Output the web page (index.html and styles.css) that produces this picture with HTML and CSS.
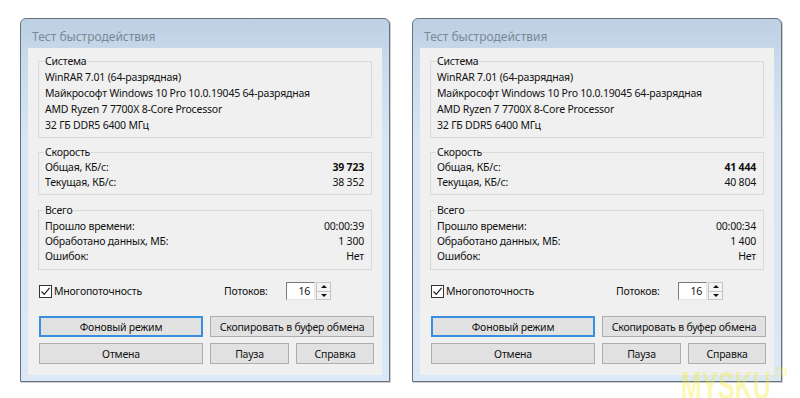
FILE: index.html
```html
<!DOCTYPE html>
<html lang="ru">
<head>
    <meta charset="UTF-8">
    <title>Тест быстродействия</title>
    <link rel="stylesheet" href="styles.css">
</head>
<body>
    <div class="desk">
        <div class="dialog">
            <div class="caption">Тест быстродействия</div>
            <div class="client">
                <fieldset class="group sys">
                    <legend>Система</legend>
                    <div class="row">WinRAR 7.01 (64-разрядная)</div>
                    <div class="row">Майкрософт Windows 10 Pro 10.0.19045 64-разрядная</div>
                    <div class="row">AMD Ryzen 7 7700X 8-Core Processor</div>
                    <div class="row">32 ГБ DDR5 6400 МГц</div>
                </fieldset>
                <fieldset class="group speed">
                    <legend>Скорость</legend>
                    <div class="row"><span>Общая, КБ/с:</span><b>39 723</b></div>
                    <div class="row"><span>Текущая, КБ/с:</span><span>38 352</span></div>
                </fieldset>
                <fieldset class="group total">
                    <legend>Всего</legend>
                    <div class="row"><span>Прошло времени:</span><span>00:00:39</span></div>
                    <div class="row"><span>Обработано данных, МБ:</span><span>1 300</span></div>
                    <div class="row"><span>Ошибок:</span><span>Нет</span></div>
                </fieldset>
                <div class="opts">
                    <label class="check">
                        <span class="box"><svg width="11" height="11" viewBox="0 0 11 11"><path d="M1.5 5.5 L4.2 8.4 L9.6 1.8" fill="none" stroke="#222" stroke-width="1.2"/></svg></span>
                        Многопоточность
                    </label>
                    <span class="threads">Потоков:</span>
                    <span class="spin">
                        <span class="edit">16</span>
                        <span class="arrows"><span class="up"></span><span class="down"></span></span>
                    </span>
                </div>
                <div class="buttons">
                    <button class="btn default">Фоновый режим</button>
                    <button class="btn wide">Скопировать в буфер обмена</button>
                    <button class="btn">Отмена</button>
                    <button class="btn">Пауза</button>
                    <button class="btn">Справка</button>
                </div>
            </div>
        </div>

        <div class="dialog">
            <div class="caption">Тест быстродействия</div>
            <div class="client">
                <fieldset class="group sys">
                    <legend>Система</legend>
                    <div class="row">WinRAR 7.01 (64-разрядная)</div>
                    <div class="row">Майкрософт Windows 10 Pro 10.0.19045 64-разрядная</div>
                    <div class="row">AMD Ryzen 7 7700X 8-Core Processor</div>
                    <div class="row">32 ГБ DDR5 6400 МГц</div>
                </fieldset>
                <fieldset class="group speed">
                    <legend>Скорость</legend>
                    <div class="row"><span>Общая, КБ/с:</span><b>41 444</b></div>
                    <div class="row"><span>Текущая, КБ/с:</span><span>40 804</span></div>
                </fieldset>
                <fieldset class="group total">
                    <legend>Всего</legend>
                    <div class="row"><span>Прошло времени:</span><span>00:00:34</span></div>
                    <div class="row"><span>Обработано данных, МБ:</span><span>1 400</span></div>
                    <div class="row"><span>Ошибок:</span><span>Нет</span></div>
                </fieldset>
                <div class="opts">
                    <label class="check">
                        <span class="box"><svg width="11" height="11" viewBox="0 0 11 11"><path d="M1.5 5.5 L4.2 8.4 L9.6 1.8" fill="none" stroke="#222" stroke-width="1.2"/></svg></span>
                        Многопоточность
                    </label>
                    <span class="threads">Потоков:</span>
                    <span class="spin">
                        <span class="edit">16</span>
                        <span class="arrows"><span class="up"></span><span class="down"></span></span>
                    </span>
                </div>
                <div class="buttons">
                    <button class="btn default">Фоновый режим</button>
                    <button class="btn wide">Скопировать в буфер обмена</button>
                    <button class="btn">Отмена</button>
                    <button class="btn">Пауза</button>
                    <button class="btn">Справка</button>
                </div>
            </div>
        </div>
    </div>

    <div class="watermark">MYSKU<span class="ru">.ru</span></div>
</body>
</html>
```

FILE: styles.css
```css
body {
    margin: 0;
    background: #fff;
    font-family: 'Noto Sans', 'Open Sans', sans-serif;
    font-size: 10.5px;
    letter-spacing: -0.2px;
    color: #111;
    position: relative;
    height: 398px;
    overflow: hidden;
}

.desk {
    display: flex;
    gap: 22px;
    padding: 18px 0 0 20px;
}

/* window frame */
.dialog {
    width: 370px;
    height: 364px;
    box-sizing: border-box;
    border: 1px solid #66717d;
    border-radius: 6px 6px 0 0;
    box-shadow: 1px 1px 0 #cfcfcf;
    background: linear-gradient(#bccfe3 0, #c9daec 40px, #d7e5f4 120px, #dbe8f6 100%);
}

.caption {
    height: 29px;
    box-sizing: border-box;
    padding: 8px 0 0 11px;
    line-height: 20px;
    font-size: 12px;
    letter-spacing: 0;
    color: #7b8996;
}

.client {
    margin: 0 7px;
    height: 327px;
    box-sizing: border-box;
    background: #f0f0f0;
    padding: 6px 10px 0 10px;
}

/* group boxes */
.group {
    margin: 0;
    min-width: 0;
    border: 1px solid #d9d9d9;
    padding: 1px 7px 4px 6px;
}

.group legend {
    padding: 0 1px;
    margin-left: -1px;
    line-height: 14px;
}

.speed {
    margin-top: 7px;
}

.total {
    margin-top: 8px;
    padding-top: 2px;
    padding-bottom: 5px;
}

.row {
    display: flex;
    justify-content: space-between;
    line-height: 15px;
    white-space: nowrap;
}

.sys .row {
    line-height: 16px;
}

.row b {
    font-weight: bold;
}

/* checkbox + thread count */
.opts {
    margin-top: 12px;
    padding-left: 1px;
    display: grid;
    grid-template-columns: 185px 62px auto;
    align-items: center;
    height: 18px;
}

.check {
    display: flex;
    align-items: center;
    gap: 2px;
}

.box {
    width: 13px;
    height: 13px;
    box-sizing: border-box;
    border: 1px solid #333;
    background: #fff;
    display: flex;
    align-items: center;
    justify-content: center;
}

.spin {
    display: flex;
    height: 18px;
}

.edit {
    width: 29px;
    box-sizing: border-box;
    border: 1px solid #e3e3e3;
    border-top-color: #7a7a7a;
    border-left-color: #7a7a7a;
    background: #fff;
    text-align: right;
    padding-right: 4px;
    line-height: 16px;
}

.arrows {
    width: 15px;
    display: flex;
    flex-direction: column;
    margin-left: 1px;
    border: 1px solid #c4c4c4;
    box-sizing: border-box;
    background: #f4f4f4;
}

.arrows span {
    flex: 1;
    position: relative;
}

.arrows .up {
    border-bottom: 1px solid #c4c4c4;
}

.arrows span::after {
    content: '';
    position: absolute;
    left: 4px;
    top: 2px;
    border-left: 3px solid transparent;
    border-right: 3px solid transparent;
}

.arrows .up::after {
    border-bottom: 3px solid #111;
}

.arrows .down::after {
    border-top: 3px solid #111;
}

/* push buttons */
.buttons {
    margin-top: 16px;
    padding-left: 1px;
    display: grid;
    grid-template-columns: 164px 79px 78px;
    grid-auto-rows: 21px;
    column-gap: 7px;
    row-gap: 6px;
}

.btn {
    font: inherit;
    letter-spacing: inherit;
    color: #111;
    background: #e1e1e1;
    border: 1px solid #adadad;
    padding: 0;
    margin: 0;
}

.btn.default {
    border: 2px solid #3a8ee0;
}

.btn.wide {
    grid-column: 2 / 4;
}

.watermark {
    position: absolute;
    left: 681px;
    top: 366px;
    font-family: 'Liberation Sans', sans-serif;
    font-weight: bold;
    font-size: 40px;
    line-height: 40px;
    letter-spacing: 0;
    color: rgba(245, 235, 40, 0.35);
    transform: scaleX(0.62);
    transform-origin: left top;
    white-space: nowrap;
}

.watermark .ru {
    font-size: 18px;
    line-height: 18px;
    vertical-align: top;
    position: relative;
    top: -4px;
    margin-left: 4px;
}
```
